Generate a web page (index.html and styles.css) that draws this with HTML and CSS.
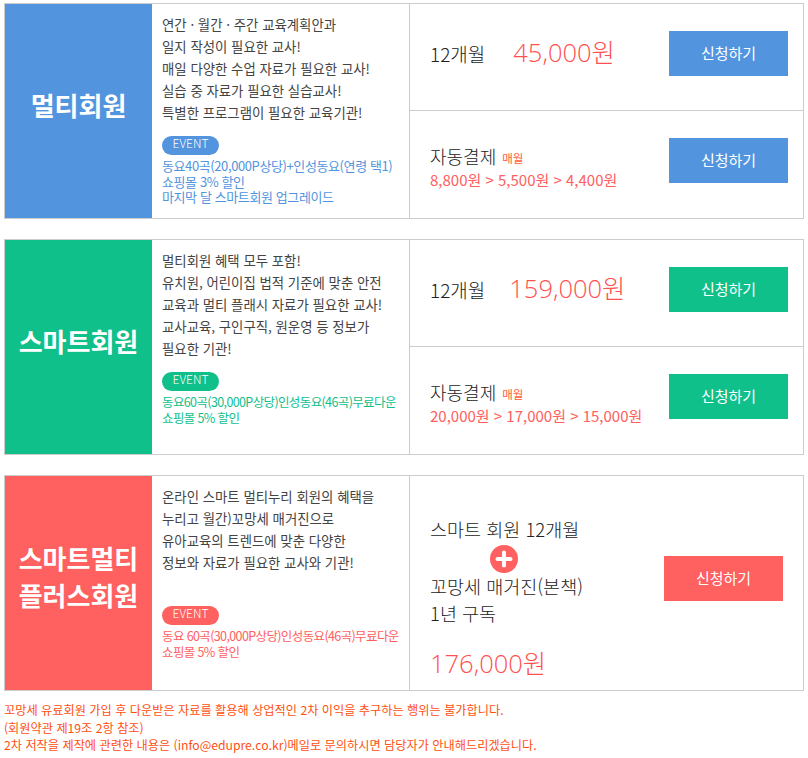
FILE: index.html
```html
<!DOCTYPE html>
<html lang="ko">
<head>
<meta charset="utf-8">
<title>회원 가입</title>
<link rel="stylesheet" href="styles.css">
</head>
<body>
<section class="plan blue">
  <h2 class="name">멀티회원</h2>
  <div class="info">
    <p class="desc">연간 · 월간 · 주간 교육계획안과<br>일지 작성이 필요한 교사!<br>매일 다양한 수업 자료가 필요한 교사!<br>실습 중 자료가 필요한 실습교사!<br>특별한 프로그램이 필요한 교육기관!</p>
    <span class="event">EVENT</span>
    <p class="perk">동요40곡(20,000P상당)+인성동요(연령 택1)<br>쇼핑몰 3% 할인<br>마지막 달 스마트회원 업그레이드</p>
  </div>
  <div class="options">
    <div class="row">
      <div class="term"><span class="months">12개월</span><span class="price p1">45,000원</span></div>
      <a class="btn">신청하기</a>
    </div>
    <div class="row auto">
      <div class="term"><div class="autoline"><span class="months">자동결제</span> <small>매월</small></div><div class="steps">8,800원 &gt; 5,500원 &gt; 4,400원</div></div>
      <a class="btn">신청하기</a>
    </div>
  </div>
</section>
<section class="plan green">
  <h2 class="name">스마트회원</h2>
  <div class="info">
    <p class="desc">멀티회원 혜택 모두 포함!<br>유치원, 어린이집 법적 기준에 맞춘 안전<br>교육과 멀티 플래시 자료가 필요한 교사!<br>교사교육, 구인구직, 원운영 등 정보가<br>필요한 기관!</p>
    <span class="event">EVENT</span>
    <p class="perk tight">동요60곡(30,000P상당)인성동요(46곡)무료다운<br>쇼핑몰 5% 할인</p>
  </div>
  <div class="options">
    <div class="row">
      <div class="term"><span class="months">12개월</span><span class="price p2">159,000원</span></div>
      <a class="btn">신청하기</a>
    </div>
    <div class="row auto">
      <div class="term"><div class="autoline"><span class="months">자동결제</span> <small>매월</small></div><div class="steps">20,000원 &gt; 17,000원 &gt; 15,000원</div></div>
      <a class="btn">신청하기</a>
    </div>
  </div>
</section>
<section class="plan red">
  <h2 class="name">스마트멀티<br>플러스회원</h2>
  <div class="info">
    <p class="desc tall">온라인 스마트 멀티누리 회원의 혜택을<br>누리고 월간)꼬망세 매거진으로<br>유아교육의 트렌드에 맞춘 다양한<br>정보와 자료가 필요한 교사와 기관!</p>
    <span class="event">EVENT</span>
    <p class="perk tight">동요 60곡(30,000P상당)인성동요(46곡)무료다운<br>쇼핑몰 5% 할인</p>
  </div>
  <div class="combo">
    <div class="bundle">
      <div class="line">스마트 회원 12개월</div>
      <svg class="plus" viewBox="0 0 28 28" aria-hidden="true"><circle cx="14" cy="14" r="14" fill="#ff6060"/><path d="M14 7.5v13M7.5 14h13" stroke="#fff" stroke-width="4" stroke-linecap="round"/></svg>
      <div class="line">꼬망세 매거진(본책)</div>
      <div class="line">1년 구독</div>
      <div class="price p3">176,000원</div>
    </div>
    <a class="btn">신청하기</a>
  </div>
</section>
<footer class="notice">꼬망세 유료회원 가입 후 다운받은 자료를 활용해 상업적인 2차 이익을 추구하는 행위는 불가합니다.<br>(회원약관 제19조 2항 참조)<br>2차 저작을 제작에 관련한 내용은 (info@edupre.co.kr)메일로 문의하시면 담당자가 안내해드리겠습니다.</footer>
</body>
</html>
```
FILE: styles.css
```css
* { box-sizing: border-box; }
html, body { margin: 0; padding: 0; background: #fff; }
body {
  padding: 3px 4px 0;
  width: 808px;
  font-family: "Noto Sans CJK KR", "Noto Sans", sans-serif;
  font-weight: 300;
  color: #333;
}
p, h2 { margin: 0; }

.plan {
  display: flex;
  width: 800px;
  height: 216px;
  margin-bottom: 20px;
  border: 1px solid #ccc;
}
.blue { --c: #5294de; }
.green { --c: #10c08a; }
.red { --c: #ff6060; }

.name {
  flex: 0 0 147px;
  display: flex;
  align-items: center;
  justify-content: center;
  text-align: center;
  padding-bottom: 14px;
  background: var(--c);
  color: #fff;
  font-size: 26px;
  font-weight: 700;
  line-height: 37px;
}
.info {
  flex: 0 0 258px;
  padding: 9px 0 0 10px;
  border-right: 1px solid #ccc;
}
.desc {
  font-size: 13.4px;
  font-weight: 400;
  line-height: 22px;
  color: #444;
  margin-bottom: 13px;
  white-space: nowrap;
}
.desc.tall { margin-bottom: 33px; }
.event {
  display: block;
  width: 57px;
  height: 19px;
  border-radius: 10px;
  background: var(--c);
  color: #fff;
  font-size: 12px;
  line-height: 14px;
  text-align: center;
}
.perk {
  margin-top: 3px;
  font-size: 13px;
  font-weight: 400;
  line-height: 15.5px;
  color: var(--c);
  white-space: nowrap;
  letter-spacing: -0.4px;
}
.perk.tight { margin-top: 3px; font-size: 12.5px; letter-spacing: -0.62px; }

.options { flex: 1; display: flex; flex-direction: column; }
.row {
  flex: 1;
  display: flex;
  justify-content: space-between;
  padding: 27px 15px 0 20px;
}
.row:first-child { flex: 0 0 106px; }
.row + .row { border-top: 1px solid #ccc; }
.term { color: #111; }
.months { font-size: 19px; line-height: 45px; color: #222; }
.price {
  color: #ff5050;
  font-weight: 300;
  font-size: 25.5px;
  font-family: "Open Sans", "Noto Sans CJK KR", sans-serif;
}
.p1 { margin-left: 28px; }
.p2 { margin-left: 24px; }
.auto .term { padding-top: 4px; }
.autoline { height: 28px; display: flex; align-items: center; gap: 6px; }
.autoline .months { font-size: 18px; line-height: 28px; }
small { font-size: 11.5px; font-weight: 400; color: #ff5b3a; padding-top: 4px; }
.steps { color: #ff6060; font-size: 15px; font-weight: 400; line-height: 20px; white-space: nowrap; }

.btn {
  flex: none;
  display: block;
  width: 119px;
  height: 45px;
  background: var(--c);
  color: #fff;
  font-size: 15px;
  font-weight: 400;
  line-height: 43px;
  text-align: center;
}

.combo {
  flex: 1;
  display: flex;
  justify-content: space-between;
  align-items: flex-start;
  padding: 40px 20px 0 20px;
}
.combo .btn { margin-top: 40px; }
.line { font-size: 18.5px; line-height: 27px; color: #222; white-space: nowrap; }
.plus { display: block; width: 28px; height: 28px; margin: 2px 0 0 60px; }
.p3 { display: block; margin-top: 19px; line-height: 34px; }

.notice {
  margin-top: -9px;
  font-size: 12.2px;
  font-weight: 400;
  line-height: 17.5px;
  color: #ff4f10;
  white-space: nowrap;
}
```
